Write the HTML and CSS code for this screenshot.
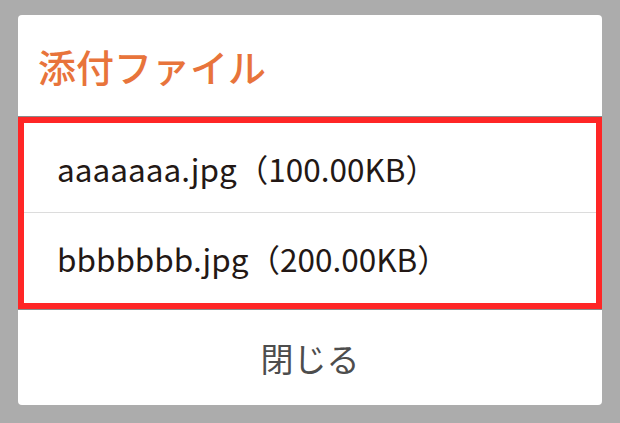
FILE: index.html
```html
<!doctype html>
<html>

<head>
    <meta charset="UTF-8">
    <title>添付ファイル</title>
    <link rel="stylesheet" href="styles.css">
</head>

<body>
    <div class="dialog">
        <div class="dialog-title">添付ファイル</div>
        <ul class="file-list">
            <li class="file-item">aaaaaaa.jpg（100.00KB）</li>
            <li class="file-item">bbbbbbb.jpg（200.00KB）</li>
        </ul>
        <div class="dialog-close">閉じる</div>
    </div>
</body>

</html>
```

FILE: styles.css
```css
html {
    --bg: #acacac;
    --title: #e8743b;
    --text: #231815;
    --close-text: #4d4d4d;
    --highlight: #ff2626;
}
body {
    margin: 0;
    padding: 15px 18px;
    background-color: var(--bg);
    font-family: "Noto Sans CJK JP", "Noto Sans", sans-serif;
}
.dialog {
    width: 584px;
    background-color: #fff;
    border-radius: 4px;
    overflow: hidden;
}
.dialog-title {
    display: flex;
    align-items: center;
    height: 101px;
    padding-left: 20px;
    font-size: 38px;
    font-weight: 500;
    color: var(--title);
    border-bottom: 1px solid #8a8a8a;
}
.file-list {
    margin: 0;
    padding: 0;
    list-style: none;
    border: 6px solid var(--highlight);
}
.file-item {
    display: flex;
    align-items: center;
    height: 89px;
    padding-left: 33px;
    font-size: 31.5px;
    color: var(--text);
}
.file-item + .file-item {
    height: 90px;
    border-top: 1px solid #dcdcdc;
}
.dialog-close {
    display: flex;
    align-items: center;
    justify-content: center;
    height: 95px;
    font-size: 33px;
    color: var(--close-text);
    border-top: 1px solid #8a8a8a;
}
```
